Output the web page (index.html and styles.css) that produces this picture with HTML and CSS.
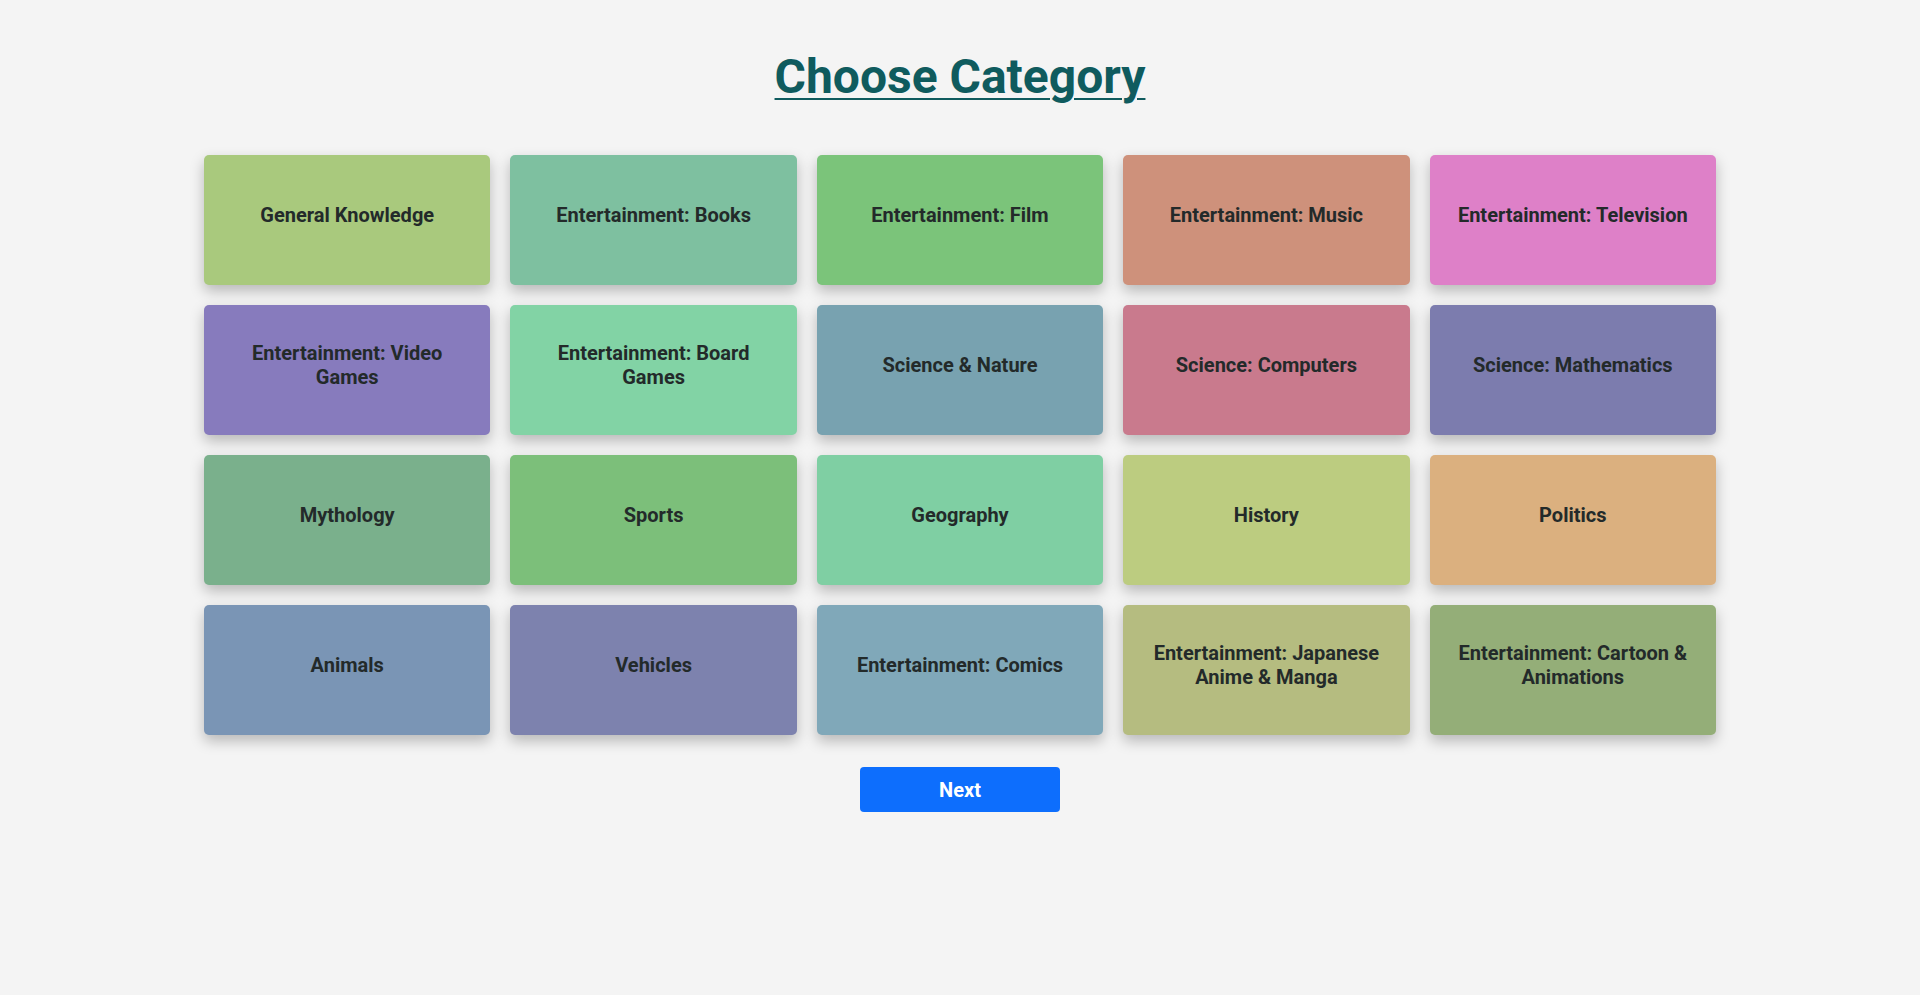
FILE: index.html
```html
<!DOCTYPE html>
<html lang="en">
<head>
<meta charset="utf-8">
<title>Choose Category</title>
<link rel="stylesheet" href="styles.css">
</head>
<body>
<main class="page">
  <h1 class="title">Choose Category</h1>
  <div class="grid">
    <div class="card c1">General Knowledge</div>
    <div class="card c2">Entertainment: Books</div>
    <div class="card c3">Entertainment: Film</div>
    <div class="card c4">Entertainment: Music</div>
    <div class="card c5">Entertainment: Television</div>
    <div class="card c6">Entertainment: Video Games</div>
    <div class="card c7">Entertainment: Board Games</div>
    <div class="card c8">Science &amp; Nature</div>
    <div class="card c9">Science: Computers</div>
    <div class="card c10">Science: Mathematics</div>
    <div class="card c11">Mythology</div>
    <div class="card c12">Sports</div>
    <div class="card c13">Geography</div>
    <div class="card c14">History</div>
    <div class="card c15">Politics</div>
    <div class="card c16">Animals</div>
    <div class="card c17">Vehicles</div>
    <div class="card c18">Entertainment: Comics</div>
    <div class="card c19">Entertainment: Japanese Anime &amp; Manga</div>
    <div class="card c20">Entertainment: Cartoon &amp; Animations</div>
  </div>
  <button class="next" type="button">Next</button>
</main>
</body>
</html>
```

FILE: styles.css
```css
* { box-sizing: border-box; }
html, body { margin: 0; padding: 0; }
body {
  background: #f4f4f4;
  font-family: Roboto, "Liberation Sans", Arial, sans-serif;
}
.page {
  display: flex;
  flex-direction: column;
  align-items: center;
  padding-top: 48px;
}
.title {
  margin: 0 0 50px;
  font-size: 48px;
  font-weight: 700;
  line-height: normal;
  color: #0f5b5e;
  text-decoration: underline;
  text-decoration-thickness: 2px;
  text-underline-offset: 5px;
}
.grid {
  width: 1512px;
  display: grid;
  grid-template-columns: repeat(5, 1fr);
  gap: 20px;
}
.card {
  height: 130px;
  padding: 0 20px 10px;
  display: flex;
  align-items: center;
  justify-content: center;
  text-align: center;
  font-size: 20px;
  font-weight: 700;
  line-height: 24px;
  color: #232a2a;
  border-radius: 5px;
  box-shadow: 0 6px 14px rgba(0, 0, 0, 0.25);
}
.c1 { background: #a9c97d; }
.c2 { background: #7ec0a0; }
.c3 { background: #7bc47a; }
.c4 { background: #ce917b; }
.c5 { background: #de80c8; }
.c6 { background: #877bbd; }
.c7 { background: #82d3a5; }
.c8 { background: #78a2b0; }
.c9 { background: #c97a8d; }
.c10 { background: #7c7cae; }
.c11 { background: #7ab08c; }
.c12 { background: #7cbf7a; }
.c13 { background: #7fcfa3; }
.c14 { background: #bccc80; }
.c15 { background: #dbb07f; }
.c16 { background: #7a95b5; }
.c17 { background: #7d82ae; }
.c18 { background: #80a8b9; }
.c19 { background: #b5bc80; }
.c20 { background: #94ae78; }
.next {
  margin-top: 32px;
  width: 200px;
  height: 45px;
  border: none;
  border-radius: 4px;
  background: #0d6efd;
  color: #ffffff;
  font-family: Roboto, "Liberation Sans", Arial, sans-serif;
  font-size: 20px;
  font-weight: 700;
  cursor: pointer;
}
```
